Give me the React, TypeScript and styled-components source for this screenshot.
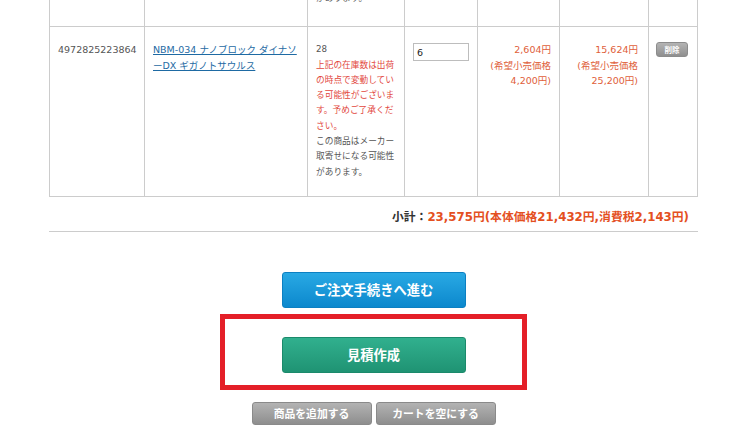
import React from "react";
import styled, { createGlobalStyle } from "styled-components";

const GlobalStyle = createGlobalStyle`
  html, body { margin: 0; padding: 0; background: #ffffff; }
  body { font-family: "DejaVu Sans", "Noto Sans CJK JP", sans-serif; color: #555; }
  * { box-sizing: border-box; }
`;

const Page = styled.div`
  width: 735px;
  height: 443px;
  overflow: hidden;
  padding-left: 49px;
`;

const Cart = styled.div`
  width: 649px;
  margin-top: -24px;
`;

const Row = styled.div<{ $padBottom?: number }>`
  display: grid;
  grid-template-columns: 95px 163px 97px 73px 82px 89px 49px;
  border-left: 1px solid #cccccc;
  border-bottom: 1px solid #cccccc;
  --pad-bottom: ${(p) => (p.$padBottom ?? 16)}px;
`;

const Cell = styled.div<{ $align?: "left" | "right" }>`
  border-right: 1px solid #cccccc;
  padding: 15px 8px var(--pad-bottom);
  font-size: 9.5px;
  line-height: 15.3px;
  text-align: ${(p) => p.$align ?? "left"};
  white-space: pre;
`;

const Code = styled.span`
  color: #555555;
`;

const ItemLink = styled.a`
  color: #1e6aa3;
  text-decoration: underline;
  cursor: pointer;
`;

const StockText = styled.div<{ $warn?: boolean }>`
  font-size: 8.7px;
  line-height: 15.3px;
  color: ${(p) => (p.$warn ? "#e2473d" : "#555555")};
`;

const QtyInput = styled.input`
  display: block;
  width: 56px;
  height: 18px;
  margin-top: 1px;
  border: 1px solid #bdbdbd;
  padding: 0 3px;
  font-family: "DejaVu Sans", sans-serif;
  font-size: 9.5px;
  color: #222;
  outline: none;
`;

const Price = styled.div`
  color: #e0603a;
`;

const SmallButton = styled.button`
  display: block;
  width: 32px;
  height: 15px;
  margin-left: -1px;
  border: 1px solid #8c8c8c;
  border-radius: 3px;
  background: linear-gradient(#b4b4b4, #8f8f8f);
  color: #ffffff;
  font-family: "Noto Sans CJK JP", sans-serif;
  font-weight: 700;
  font-size: 7.5px;
  line-height: 13px;
  padding: 0;
`;

const Subtotal = styled.div`
  width: 649px;
  display: flex;
  justify-content: flex-end;
  align-items: center;
  height: 35px;
  padding: 3px 9px 0 0;
  border-bottom: 1px solid #cccccc;
  font-size: 11.8px;
  font-weight: 700;
  white-space: nowrap;
`;

const SubLabel = styled.span`
  color: #333333;
`;

const SubAmount = styled.span`
  color: #e4501f;
`;

const Actions = styled.div`
  width: 649px;
  display: flex;
  flex-direction: column;
  align-items: center;
  padding-top: 40px;
`;

const MainButton = styled.button<{ $tone: "blue" | "green" }>`
  width: 184px;
  height: 36px;
  border-radius: 3px;
  border: 1px solid ${(p) => (p.$tone === "blue" ? "#0c80c2" : "#1b8a6b")};
  background: ${(p) =>
    p.$tone === "blue"
      ? "linear-gradient(#29a9e4, #0c88cd)"
      : "linear-gradient(#31b08e, #1f9373)"};
  color: #ffffff;
  font-family: "Noto Sans CJK JP", sans-serif;
  font-weight: 700;
  font-size: 13.3px;
  letter-spacing: 0;
  padding: 0;
  cursor: pointer;
`;

const Highlight = styled.div`
  margin-top: 6px;
  width: 307px;
  height: 76px;
  border: 5px solid #e41f28;
  display: flex;
  justify-content: center;
  padding-top: 18px;
`;

const SubActions = styled.div`
  display: flex;
  gap: 4px;
  margin-top: 12px;
`;

const GrayButton = styled.button`
  width: 120px;
  height: 23px;
  border-radius: 3px;
  border: 1px solid #8a8a8a;
  background: linear-gradient(#b3b3b3, #8e8e8e);
  color: #ffffff;
  font-family: "Noto Sans CJK JP", sans-serif;
  font-weight: 700;
  font-size: 10.8px;
  padding: 0;
  cursor: pointer;
`;

export default function App() {
  return (
    <>
      <GlobalStyle />
      <Page>
        <Cart>
          <Row $padBottom={20}>
            <Cell />
            <Cell />
            <Cell>
              <StockText>があります。</StockText>
            </Cell>
            <Cell />
            <Cell />
            <Cell />
            <Cell />
          </Row>
          <Row>
            <Cell>
              <Code>4972825223864</Code>
            </Cell>
            <Cell>
              <ItemLink>{"NBM-034 ナノブロック ダイナソ\nーDX ギガノトサウルス"}</ItemLink>
            </Cell>
            <Cell>
              <StockText>28</StockText>
              <StockText $warn>
                {"上記の在庫数は出荷\nの時点で変動してい\nる可能性がございま\nす。予めご了承くだ\nさい。"}
              </StockText>
              <StockText>{"この商品はメーカー\n取寄せになる可能性\nがあります。"}</StockText>
            </Cell>
            <Cell>
              <QtyInput defaultValue="6" />
            </Cell>
            <Cell $align="right">
              <Price>{"2,604円\n(希望小売価格\n4,200円)"}</Price>
            </Cell>
            <Cell $align="right" style={{ paddingRight: 10 }}>
              <Price>{"15,624円\n(希望小売価格\n25,200円)"}</Price>
            </Cell>
            <Cell>
              <SmallButton>削除</SmallButton>
            </Cell>
          </Row>
        </Cart>
        <Subtotal>
          <SubLabel>小計：</SubLabel>
          <SubAmount>23,575円(本体価格21,432円,消費税2,143円)</SubAmount>
        </Subtotal>
        <Actions>
          <MainButton $tone="blue">ご注文手続きへ進む</MainButton>
          <Highlight>
            <MainButton $tone="green">見積作成</MainButton>
          </Highlight>
          <SubActions>
            <GrayButton>商品を追加する</GrayButton>
            <GrayButton>カートを空にする</GrayButton>
          </SubActions>
        </Actions>
      </Page>
    </>
  );
}
